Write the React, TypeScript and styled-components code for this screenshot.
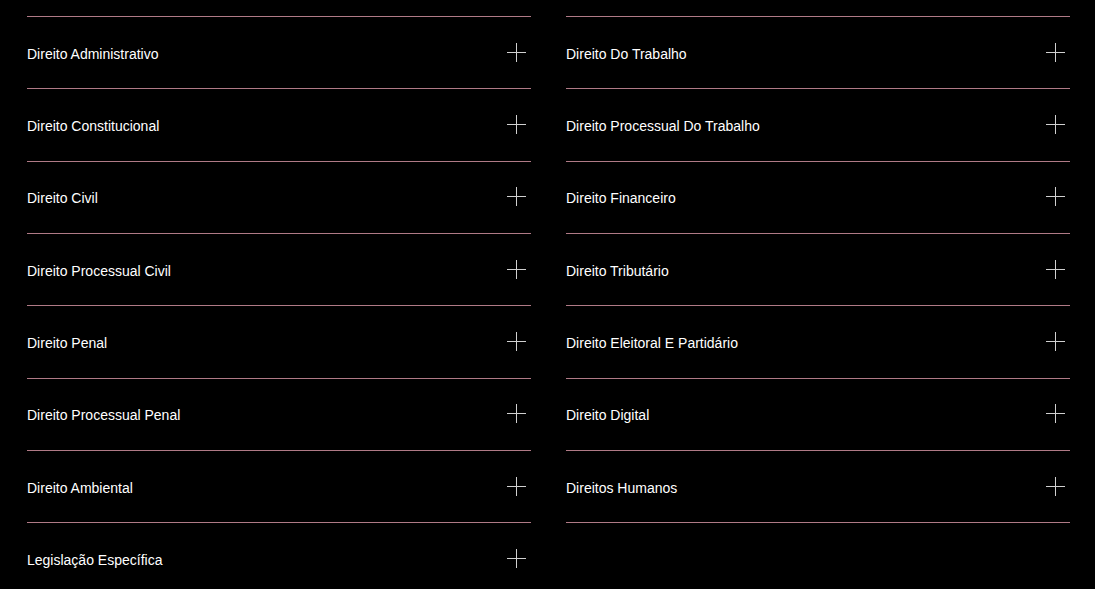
import React from "react";
import styled, { createGlobalStyle } from "styled-components";

const Global = createGlobalStyle`
  html, body { margin: 0; padding: 0; background: #000; }
  body { font-family: "Liberation Sans", Arial, sans-serif; }
`;

const Page = styled.div`
  display: grid;
  grid-template-columns: 504px 504px;
  column-gap: 35px;
  align-items: start;
  padding: 16px 0 0 27px;
  background: #000;
  min-height: 589px;
  box-sizing: border-box;
`;

const Column = styled.ul`
  list-style: none;
  margin: 0;
  padding: 0;
  display: flex;
  flex-direction: column;
  border-bottom: 1px solid #b07a86;
`;

const Item = styled.li`
  box-sizing: border-box;
  height: 72.33px;
  border-top: 1px solid #b07a86;
  display: flex;
  align-items: center;
  justify-content: space-between;
  padding-right: 5px;
  cursor: pointer;
`;

const Label = styled.span`
  color: #fff;
  font-size: 14px;
  line-height: 18px;
  padding-top: 2px;
  font-family: "Liberation Sans", Arial, sans-serif;
`;

const PlusIcon = styled.svg`
  width: 19px;
  height: 19px;
  display: block;
  flex: none;
  margin-top: -1px;
`;

const Plus = () => (
  <PlusIcon viewBox="0 0 19 19">
    <path d="M0 9.5H19M9.5 0V19" stroke="#d0d0d0" strokeWidth="1" fill="none" />
  </PlusIcon>
);

const left = [
  "Direito Administrativo",
  "Direito Constitucional",
  "Direito Civil",
  "Direito Processual Civil",
  "Direito Penal",
  "Direito Processual Penal",
  "Direito Ambiental",
  "Legislação Específica",
];

const right = [
  "Direito Do Trabalho",
  "Direito Processual Do Trabalho",
  "Direito Financeiro",
  "Direito Tributário",
  "Direito Eleitoral E Partidário",
  "Direito Digital",
  "Direitos Humanos",
];

export default function App() {
  return (
    <>
      <Global />
      <Page>
        {[left, right].map((col, i) => (
          <Column key={i}>
            {col.map((t) => (
              <Item key={t}>
                <Label>{t}</Label>
                <Plus />
              </Item>
            ))}
          </Column>
        ))}
      </Page>
    </>
  );
}
